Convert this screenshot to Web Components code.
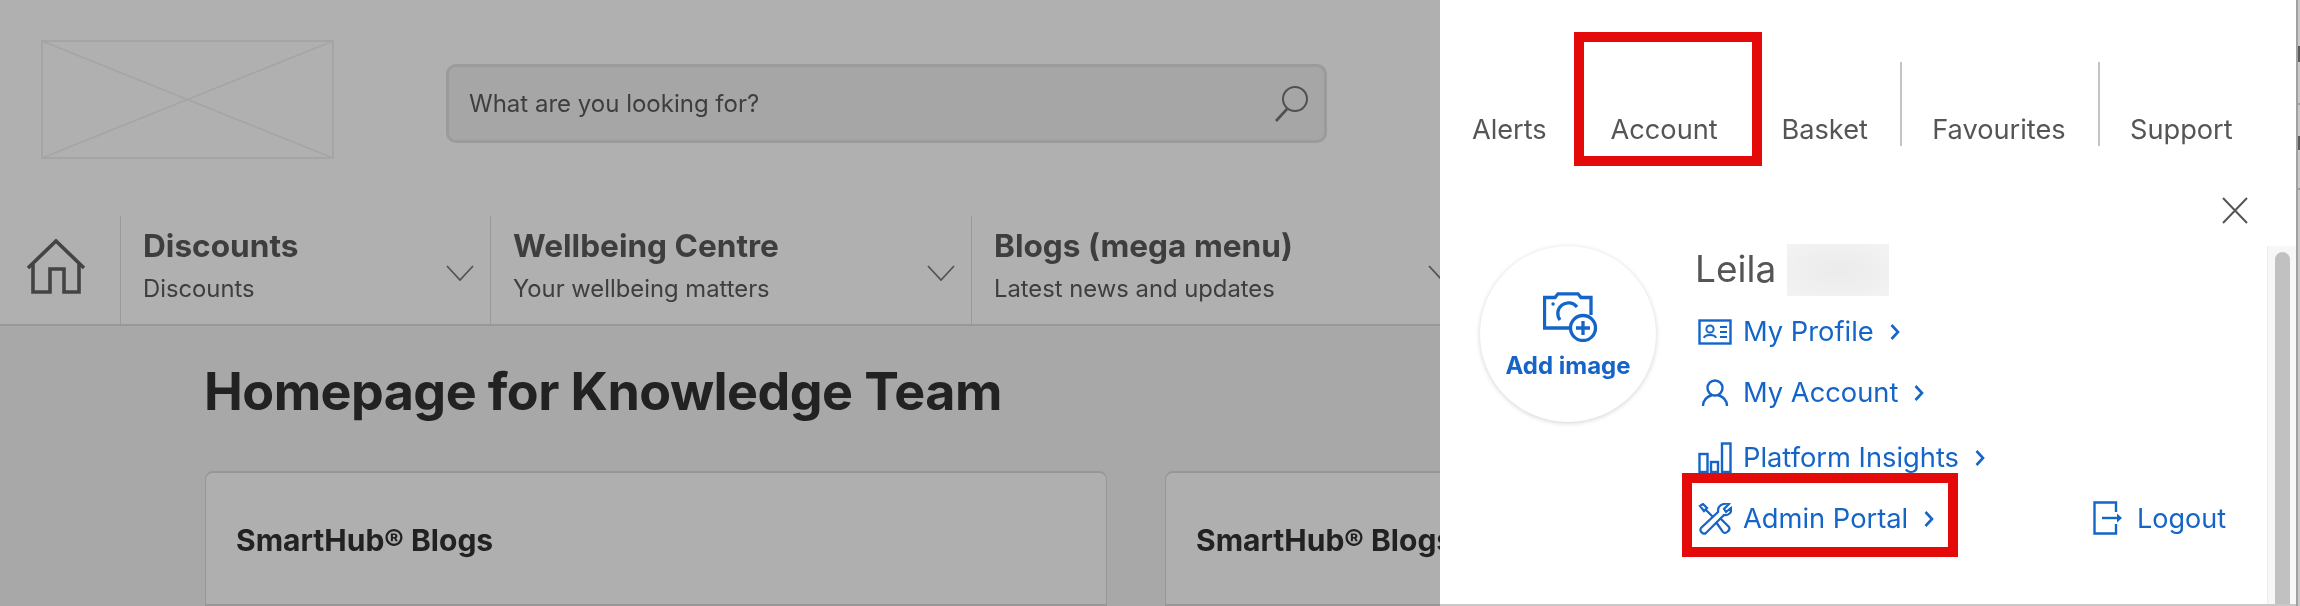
<!DOCTYPE html>
<html lang="en">
<head>
<meta charset="utf-8">
<title>SmartHub</title>
<style>
  html, body { margin: 0; height: 100%; }
  body { font-family: Inter, "Liberation Sans", sans-serif; background: #a8a8a8; overflow: hidden; }
</style>
</head>
<body>
<app-shell>
  <site-page slot="page">
    <site-header slot="header"></site-header>
    <main-nav slot="nav">
      <nav-item title-text="Discounts" sub="Discounts" style="width:370px"></nav-item>
      <nav-item title-text="Wellbeing Centre" sub="Your wellbeing matters" style="width:481px"></nav-item>
      <nav-item title-text="Blogs (mega menu)" sub="Latest news and updates" style="width:501px"></nav-item>
    </main-nav>
    <h1 slot="heading">Homepage for Knowledge Team</h1>
    <hub-card slot="cards">SmartHub® Blogs</hub-card>
    <hub-card slot="cards">SmartHub® Blogs</hub-card>
  </site-page>
  <account-panel slot="panel"></account-panel>
</app-shell>

<script>
// red annotation frame drawn over a tab or a row
class NoteBox extends HTMLElement {
  connectedCallback() {
    if (this.shadowRoot) return;
    const shadow = this.attachShadow({ mode: 'open' });
    shadow.innerHTML = `
      <style>
        :host {
          position: absolute;
          border: 10px solid #e40a0a;
          box-sizing: border-box;
          pointer-events: none;
        }
      </style>
    `;
  }
}

class AppShell extends HTMLElement {
  connectedCallback() {
    if (this.shadowRoot) return;
    const shadow = this.attachShadow({ mode: 'open' });
    shadow.innerHTML = `
      <style>
        :host { display: flex; width: 2300px; height: 606px; overflow: hidden; background: #bdbdbd; filter: blur(.45px); }
        .page { width: 1440px; flex: none; overflow: hidden; }
        .panel { width: 856px; flex: none; }
        /* sliver of the window behind the drawer */
        .edge {
          flex: 1;
          border-left: 2px solid #a0a0a0;
          background: linear-gradient(#cacaca 0 46px, #5a5a5a 46px 62px, #cacaca 62px 103px, #a0a0a0 103px 105px,
            #cacaca 105px 136px, #5a5a5a 136px 150px, #cacaca 150px 188px, #a0a0a0 188px 190px, #cacaca 190px);
        }
      </style>
      <div class="page"><slot name="page"></slot></div>
      <div class="panel"><slot name="panel"></slot></div>
      <div class="edge"></div>
    `;
  }
}

class SitePage extends HTMLElement {
  connectedCallback() {
    if (this.shadowRoot) return;
    const shadow = this.attachShadow({ mode: 'open' });
    shadow.innerHTML = `
      <style>
        :host { display: block; width: 1440px; height: 606px; background: #a8a8a8; }
        .body { padding: 0 0 0 205px; }
        ::slotted(h1) {
          margin: 0 0 0 -1px;
          height: 145px;
          padding-top: 37px;
          box-sizing: border-box;
          font: 700 52px/58px Inter, "Liberation Sans", sans-serif;
          letter-spacing: -0.55px;
          color: #222;
          white-space: nowrap;
        }
        .cards { display: grid; grid-template-columns: 902px 902px; gap: 58px; }
      </style>
      <slot name="header"></slot>
      <slot name="nav"></slot>
      <div class="body">
        <slot name="heading"></slot>
        <div class="cards"><slot name="cards"></slot></div>
      </div>
    `;
  }
}

class SiteHeader extends HTMLElement {
  connectedCallback() {
    if (this.shadowRoot) return;
    const shadow = this.attachShadow({ mode: 'open' });
    shadow.innerHTML = `
      <style>
        :host {
          display: flex;
          height: 216px;
          box-sizing: border-box;
          padding: 40px 0 0 41px;
          background: #b0b0b0;
        }
        .logo { width: 293px; height: 119px; display: block; flex: none; }
        .search {
          margin: 24px 0 0 112px;
          width: 881px;
          height: 79px;
          box-sizing: border-box;
          border: 3px solid #9b9b9b;
          border-radius: 10px;
          background: #a6a6a6;
          display: flex;
          align-items: center;
          justify-content: space-between;
          padding: 0 16px 0 20px;
          font-size: 24px;
          color: #3e3e3e;
        }
        svg.glass { width: 34px; height: 36px; }
      </style>
      <svg class="logo" viewBox="0 0 293 119" fill="none" stroke="#a5a5a5" stroke-width="1.5">
        <rect x="1" y="1" width="291" height="117" stroke-width="2"/>
        <path d="M1 1 292 118M292 1 1 118"/>
      </svg>
      <div class="search">
        <span>What are you looking for?</span>
        <svg class="glass" viewBox="0 0 34 36" fill="none" stroke="#505050" stroke-width="2">
          <circle cx="21" cy="13" r="12"/>
          <path d="M13 23 2 35" stroke-width="2.6"/>
        </svg>
      </div>
    `;
  }
}

class MainNav extends HTMLElement {
  connectedCallback() {
    if (this.shadowRoot) return;
    const shadow = this.attachShadow({ mode: 'open' });
    shadow.innerHTML = `
      <style>
        :host {
          display: flex;
          height: 110px;
          box-sizing: border-box;
          border-bottom: 2px solid #999;
          background: #b0b0b0;
        }
        .home { width: 120px; flex: none; display: flex; justify-content: center; padding: 22px 0 0 0; box-sizing: border-box; }
        svg { width: 62px; height: 58px; display: block; margin-left: -7px; }
      </style>
      <div class="home">
        <svg viewBox="0 0 62 58" fill="none" stroke="#444" stroke-width="3.6" stroke-linejoin="miter">
          <path d="M2 30 30 3 58 30"/>
          <path d="M7 25V54H24V31H38V54H53V25"/>
        </svg>
      </div>
      <slot></slot>
    `;
  }
}

class NavItem extends HTMLElement {
  connectedCallback() {
    if (this.shadowRoot) return;
    const shadow = this.attachShadow({ mode: 'open' });
    shadow.innerHTML = `
      <style>
        :host {
          display: block;
          flex: none;
          box-sizing: border-box;
          border-left: 1px solid #999;
          position: relative;
          padding: 12px 0 0 22px;
          color: #3e3e3e;
          white-space: nowrap;
        }
        .t { font-weight: 700; font-size: 31.6px; line-height: 36px; }
        .s { font-size: 23.8px; line-height: 28px; margin-top: 11px; }
        .row { display: flex; justify-content: space-between; align-items: flex-start; }
        svg { width: 28px; height: 16px; margin: 37px 16px 0 0; flex: none; }
      </style>
      <div class="row">
        <div>
          <div class="t"></div>
          <div class="s"></div>
        </div>
        <svg viewBox="0 0 28 16" fill="none" stroke="#555" stroke-width="1.8"><path d="M1 1 14 15 27 1"/></svg>
      </div>
    `;
    shadow.querySelector('.t').textContent = this.getAttribute('title-text');
    shadow.querySelector('.s').textContent = this.getAttribute('sub');
  }
}

class HubCard extends HTMLElement {
  connectedCallback() {
    if (this.shadowRoot) return;
    const shadow = this.attachShadow({ mode: 'open' });
    shadow.innerHTML = `
      <style>
        :host {
          display: block;
          height: 135px;
          box-sizing: border-box;
          padding: 50px 0 0 30px;
          border: 1px solid #979797;
          border-top-width: 2px;
          border-bottom-width: 2px;
          border-radius: 8px 8px 0 0;
          background: #afafaf;
          color: #222;
          font-weight: 700;
          font-size: 30px;
          line-height: 34px;
          white-space: nowrap;
        }
      </style>
      <slot></slot>
    `;
  }
}

class PanelTab extends HTMLElement {
  connectedCallback() {
    if (this.shadowRoot) return;
    const shadow = this.attachShadow({ mode: 'open' });
    shadow.innerHTML = `
      <style>
        :host {
          display: flex;
          align-items: flex-end;
          height: 84px;
          box-sizing: border-box;
          padding: 0 31.9px 0;
          position: relative;
          font-size: 27.2px;
          line-height: 32px;
          color: #555;
          white-space: nowrap;
        }
        :host([divided]) { border-left: 2px solid #c4c4c4; padding-left: 30.4px; }
      </style>
      <span><slot></slot></span>
    `;
  }
}

class ProfileLink extends HTMLElement {
  connectedCallback() {
    if (this.shadowRoot) return;
    const shadow = this.attachShadow({ mode: 'open' });
    shadow.innerHTML = `
      <style>
        :host {
          display: flex;
          align-items: center;
          height: 61px;
          position: relative;
          font-size: 27.3px;
          color: #1565c8;
          white-space: nowrap;
        }
        .icon { width: 45px; flex: none; display: flex; align-items: center; }
        ::slotted(svg) { display: block; }
        .chev { margin-left: 16px; width: 10px; height: 18px; }
      </style>
      <span class="icon"><slot name="icon"></slot></span>
      <slot></slot>
      <svg class="chev" viewBox="0 0 10 18" fill="none" stroke="#1565c8" stroke-width="2.6"><path d="M1.5 2 8 9 1.5 16"/></svg>
    `;
  }
}

class AccountPanel extends HTMLElement {
  connectedCallback() {
    if (this.shadowRoot) return;
    const shadow = this.attachShadow({ mode: 'open' });
    shadow.innerHTML = `
      <style>
        :host {
          display: flex;
          flex-direction: column;
          width: 856px;
          height: 606px;
          box-sizing: border-box;
          background: #fff;
          border-bottom: 2px solid #c8c8c8;
        }
        .tabs { display: flex; padding-top: 62px; }
        .close-row { height: 100px; display: flex; justify-content: flex-end; padding: 51px 48px 0 0; box-sizing: border-box; }
        .close { width: 26px; height: 27px; display: block; }
        .scroll { flex: 1; min-height: 0; display: flex; }
        .content { flex: 1; display: flex; padding: 0 41px 0 40px; min-width: 0; }
        .avatar {
          width: 176px; height: 176px; flex: none;
          box-sizing: border-box;
          border-radius: 50%;
          background: #fff;
          box-shadow: 0 1px 5px rgba(0,0,0,.18);
          display: flex; flex-direction: column; align-items: center;
          padding-top: 46px;
          color: #1565c8;
          font-weight: 700;
          font-size: 24px;
          line-height: 28px;
        }
        .avatar svg { width: 55px; height: 50px; display: block; margin-bottom: 10px; margin-left: 5px; }
        .info { margin-left: 39px; flex: 1; }
        .name { display: flex; align-items: flex-start; height: 56px; color: #555; font-size: 37px; line-height: 46px; }
        .blur {
          width: 102px; height: 52px; margin: -2px 0 0 11px;
          background: radial-gradient(ellipse at 50% 50%, #ebebeb, #f3f3f3);
        }
        .links { padding-left: 3px; margin-top: -1px; }
        .gap { margin-top: 4px; }
        .logout {
          align-self: flex-end;
          display: flex; align-items: center; gap: 14px;
          height: 34px;
          margin-bottom: 69px;
          color: #1565c8;
          font-size: 27px;
          position: relative;
        }
        .logout svg { width: 30px; height: 34px; display: block; }
        .track {
          width: 29px; flex: none; box-sizing: border-box;
          background: #f7f7f7;
          border-left: 1px solid #ececec;
          padding: 6px 6px 0 7px;
        }
        .thumb { height: 100%; background: #c1c1c1; border-radius: 8px 8px 0 0; }
      </style>
      <div class="tabs">
        <panel-tab>Alerts</panel-tab>
        <panel-tab>Account<note-box style="left:-5px;top:-30px;width:188px;height:134px"></note-box></panel-tab>
        <panel-tab>Basket</panel-tab>
        <panel-tab divided>Favourites</panel-tab>
        <panel-tab divided>Support</panel-tab>
      </div>
      <div class="close-row">
        <svg class="close" viewBox="0 0 26 27" fill="none" stroke="#555" stroke-width="2"><path d="M1 1 25 26M25 1 1 26"/></svg>
      </div>
      <div class="scroll">
        <div class="content">
          <div class="avatar">
            <svg viewBox="0 0 55 50" fill="none" stroke="#1565c8" stroke-width="3.3">
              <path d="M26 36H1.500V5.500H12L15 1.800H35L38 5.500H48V23"/>
              <path d="M17 28A10.500 10.500 0 1 1 34 15"/>
              <path d="M10 12h.1" stroke-linecap="round"/>
              <circle cx="40" cy="36" r="12.500"/>
              <path d="M40 29V43M33 36H47"/>
            </svg>
            <span>Add image</span>
          </div>
          <div class="info">
            <div class="name"><span>Leila</span><span class="blur"></span></div>
            <div class="links">
              <profile-link>
                <svg slot="icon" width="34" height="26" viewBox="0 0 34 26" fill="none" stroke="#1565c8" stroke-width="2.4">
                  <rect x="1.500" y="1.500" width="31" height="23"/>
                  <circle cx="12" cy="10" r="3.600" stroke-width="2"/>
                  <path d="M6 19C7 15 17 15 18 19" stroke-width="2"/>
                  <path d="M22 8H29M22 13H29M22 18H29" stroke-width="2"/>
                </svg>
                My Profile
              </profile-link>
              <profile-link>
                <svg slot="icon" width="34" height="28" viewBox="0 0 34 28" fill="none" stroke="#1565c8" stroke-width="2.4">
                  <circle cx="17" cy="9" r="7.500"/>
                  <path d="M5 27C5 19 11 17 14 16M29 27C29 19 23 17 20 16"/>
                </svg>
                My Account
              </profile-link>
              <profile-link class="gap">
                <svg slot="icon" width="34" height="31" viewBox="0 0 34 31" fill="none" stroke="#1565c8" stroke-width="2.4">
                  <rect x="1.500" y="12" width="8" height="18"/>
                  <rect x="13" y="20" width="7" height="10"/>
                  <rect x="24" y="1.500" width="8.500" height="28.500"/>
                </svg>
                Platform Insights
              </profile-link>
              <profile-link>
                <svg slot="icon" width="34" height="32" viewBox="0 0 34 32" fill="none" stroke="#1565c8" stroke-width="2.2">
                  <path d="M2 3 5 1 9 5 6 8ZM8 7 15 14"/>
                  <path d="M18 19 25 29C27 32 33 27 31 24L22 15"/>
                  <path d="M21 4C23 1 28 0 31 1L26 6 28 9 33 5C34 9 31 13 26 12L8 30C5 32 1 28 3 25L20 9C20 7 20 5 21 4Z"/>
                </svg>
                Admin Portal
                <note-box style="left:-16px;top:-15px;width:276px;height:84px"></note-box>
              </profile-link>
            </div>
          </div>
          <div class="logout">
            <svg viewBox="0 0 30 34" fill="none" stroke="#1565c8" stroke-width="2.4">
              <path d="M23 11V1.500H1.500V32.500H23V23"/>
              <path d="M9 17H27"/>
              <path d="M24 12.500 29 17 24 21.500Z" fill="#1565c8" stroke="none"/>
            </svg>
            <span>Logout</span>
          </div>
        </div>
        <div class="track"><div class="thumb"></div></div>
      </div>
    `;
  }
}

customElements.define('note-box', NoteBox);
customElements.define('app-shell', AppShell);
customElements.define('site-page', SitePage);
customElements.define('site-header', SiteHeader);
customElements.define('main-nav', MainNav);
customElements.define('nav-item', NavItem);
customElements.define('hub-card', HubCard);
customElements.define('panel-tab', PanelTab);
customElements.define('profile-link', ProfileLink);
customElements.define('account-panel', AccountPanel);
</script>
</body>
</html>
